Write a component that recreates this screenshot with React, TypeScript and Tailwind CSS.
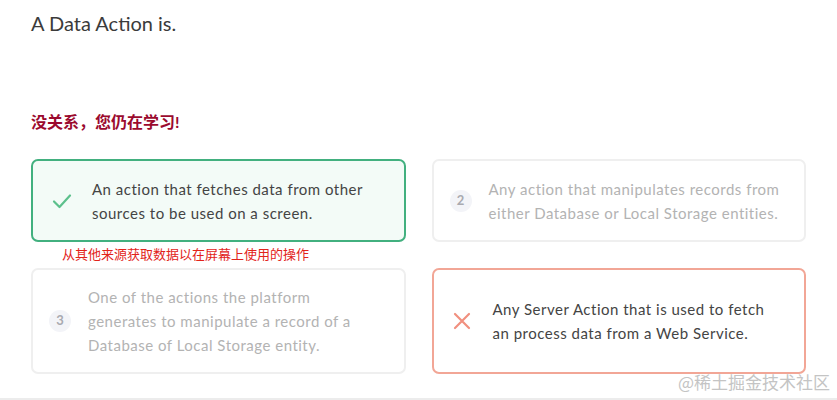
import React from 'react';

const font = { fontFamily: 'Lato, "Noto Sans CJK SC", sans-serif' };

function Check() {
  return (
    <svg width="20" height="16" viewBox="0 0 20 16" fill="none">
      <path d="M2 8.5 L7.5 14 L18 2.5" stroke="#5cc08c" strokeWidth="2.2" strokeLinecap="round" strokeLinejoin="round" />
    </svg>
  );
}

function Cross() {
  return (
    <svg width="18" height="18" viewBox="0 0 18 18" fill="none">
      <path d="M2 2 L16 16 M16 2 L2 16" stroke="#f1907f" strokeWidth="2.2" strokeLinecap="round" />
    </svg>
  );
}

function Num({ n }: { n: string }) {
  return (
    <div className="w-[22px] h-[22px] rounded-full bg-[#f3f4f8] flex items-center justify-center text-[13px] font-bold text-[#a9aab0]">
      {n}
    </div>
  );
}

export default function App() {
  return (
    <div className="relative h-[400px] bg-white border-b-2 border-[#ececec] overflow-hidden" style={font}>
      <div className="pl-[31px] pt-[9px] w-[806px]">
        <h1 className="text-[20px] leading-[28px] text-[#3b3b3b] font-normal">A Data Action is.</h1>

        <p className="mt-[74px] text-[16px] leading-[22px] font-bold text-[#9b0a2e]">没关系，您仍在学习!</p>

        <div className="mt-[26px] grid grid-cols-2 gap-x-[26px] gap-y-[26px]">
          {/* correct answer */}
          <div className="relative h-[83px] rounded-[7px] border-2 border-[#42b07f] bg-[#f3fbf7] flex items-center">
            <div className="w-[59px] pl-[19px] flex-none">
              <Check />
            </div>
            <p className="text-[15px] leading-[24px] tracking-[0.5px] text-[#444] w-[295px]">
              An action that fetches data from other sources to be used on a screen.
            </p>
            <span className="absolute left-[29px] top-[calc(100%+6px)] text-[13px] leading-[16px] text-[#e2231a] whitespace-nowrap">
              从其他来源获取数据以在屏幕上使用的操作
            </span>
          </div>

          <div className="h-[83px] rounded-[7px] border-2 border-[#efefef] bg-white flex items-center">
            <div className="w-[55px] pl-[16px] flex-none">
              <Num n="2" />
            </div>
            <p className="text-[15px] leading-[24px] tracking-[0.5px] text-[#b3b3b3] w-[310px]">
              Any action that manipulates records from either Database or Local Storage entities.
            </p>
          </div>

          <div className="h-[106px] rounded-[7px] border-2 border-[#efefef] bg-white flex items-center">
            <div className="w-[55px] pl-[16px] flex-none">
              <Num n="3" />
            </div>
            <p className="text-[15px] leading-[24px] tracking-[0.5px] text-[#b3b3b3] w-[285px]">
              One of the actions the platform generates to manipulate a record of a Database of Local Storage entity.
            </p>
          </div>

          <div className="h-[106px] rounded-[7px] border-2 border-[#f2a696] bg-white flex items-center">
            <div className="w-[59px] pl-[19px] flex-none">
              <Cross />
            </div>
            <p className="text-[15px] leading-[24px] tracking-[0.5px] text-[#444] w-[290px]">
              Any Server Action that is used to fetch an process data from a Web Service.
            </p>
          </div>
        </div>
      </div>

      <span className="absolute right-[7px] bottom-[5px] text-[17px] leading-[22px] text-[#c4c4c4]" style={{ fontFamily: '"Noto Sans CJK SC", sans-serif' }}>
        @稀土掘金技术社区
      </span>
    </div>
  );
}
